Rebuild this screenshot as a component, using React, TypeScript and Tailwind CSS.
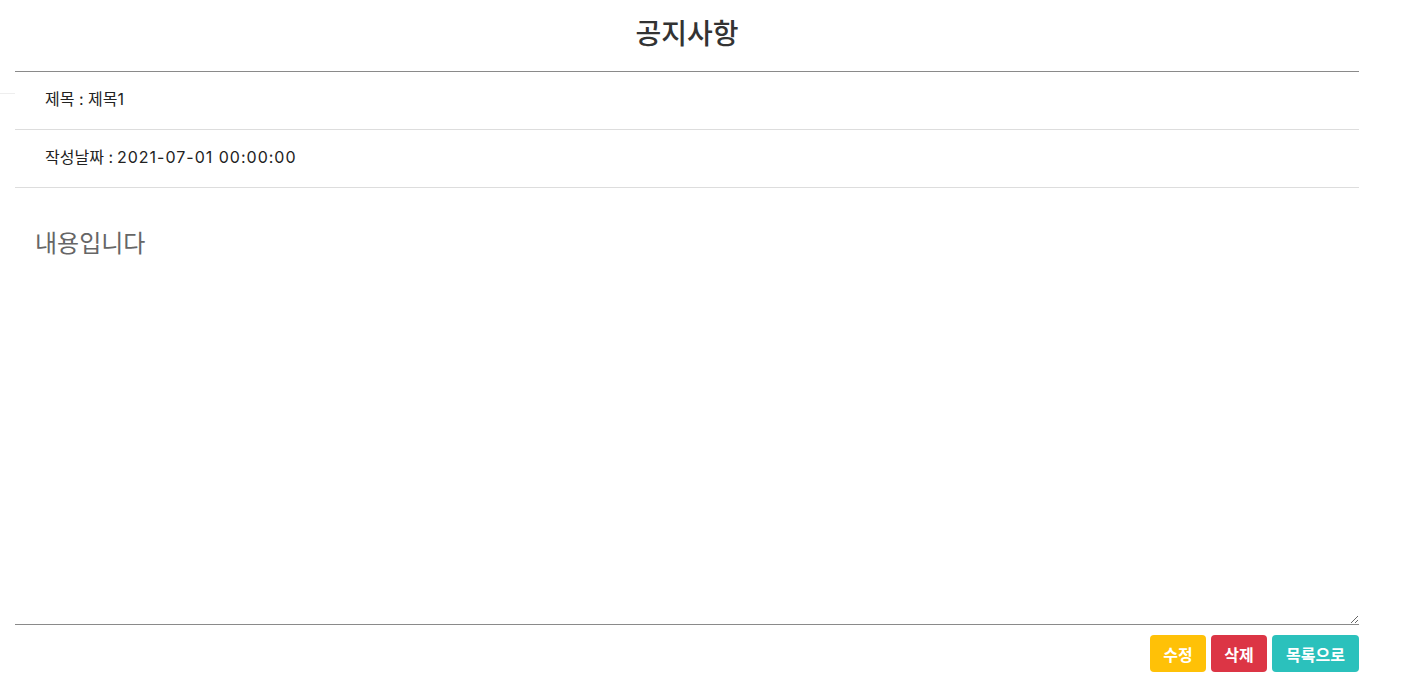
import { useState } from "react"

const font = { fontFamily: 'Inter, "Noto Sans CJK KR", "Noto Sans", sans-serif' }
const cjk = { fontFamily: '"Noto Sans CJK KR", "Noto Sans", sans-serif' }

export default function App() {
  const [content, setContent] = useState("내용입니다")

  return (
    <div className="min-h-screen bg-white flex" style={cjk}>
      {/* left gutter */}
      <div className="w-[15px] flex-shrink-0">
        <div className="mt-[93px] border-t border-[#eeeeee]"></div>
      </div>

      {/* Main */}
      <div className="w-[1344px] flex flex-col">
        <div className="h-[72px] flex items-center justify-center pb-[7px] border-b border-[#8a8a8a]">
          <h1 className="text-[28px] font-medium text-[#333333] leading-none">공지사항</h1>
        </div>

        <div className="h-[58px] flex items-center pl-[30px] pb-1 border-b border-[#dddddd] text-[16px] text-[#222222]" style={font}>
          제목 : 제목1
        </div>
        <div className="h-[58px] flex items-center pl-[30px] pb-1 border-b border-[#dddddd] text-[16px] text-[#222222]" style={font}>
          작성날짜 : <span className="ml-1 tracking-[1px]">2021-07-01 00:00:00</span>
        </div>

        <textarea
          value={content}
          onChange={(e) => setContent(e.target.value)}
          className="h-[437px] w-full border-0 border-b border-[#8a8a8a] outline-none pt-[36px] px-5 text-[24px] leading-[36px] text-[#666666]"
          style={cjk}
        />

        <div className="flex justify-end gap-[5px] mt-[10px]">
          <button className="h-[37px] w-[56px] rounded bg-[#ffc107] text-white text-[16px] font-bold">수정</button>
          <button className="h-[37px] w-[56px] rounded bg-[#dc3545] text-white text-[16px] font-bold">삭제</button>
          <button className="h-[37px] w-[87px] rounded bg-[#2bc1bc] text-white text-[16px] font-bold">목록으로</button>
        </div>
      </div>
    </div>
  )
}
